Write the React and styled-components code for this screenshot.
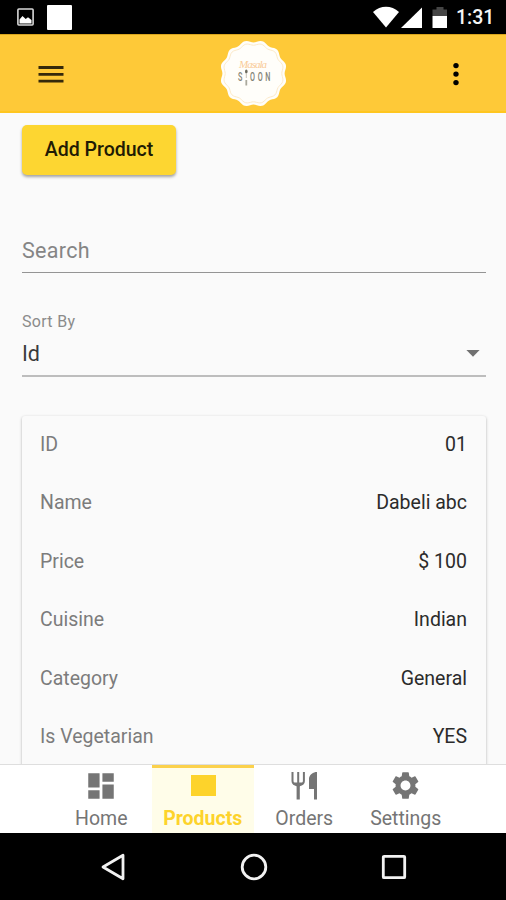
import styled, { createGlobalStyle, css } from 'styled-components';
import { MdDashboard, MdSettings } from 'react-icons/md';

const product = [
  { label: 'ID', value: '01' },
  { label: 'Name', value: 'Dabeli abc' },
  { label: 'Price', value: '$ 100' },
  { label: 'Cuisine', value: 'Indian' },
  { label: 'Category', value: 'General' },
  { label: 'Is Vegetarian', value: 'YES' },
];

const tabs = [
  { name: 'Home', icon: <MdDashboard size={34} /> },
  { name: 'Products', icon: <ProductIcon />, active: true },
  { name: 'Orders', icon: <CutleryIcon /> },
  { name: 'Settings', icon: <MdSettings size={33} /> },
];

export default function App() {
  return (
    <Screen>
      <GlobalStyle />
      <StatusBar />
      <Header />
      <Main>
        <AddButton type="button">Add Product</AddButton>
        <SearchInput placeholder="Search" aria-label="Search" />
        <SortField>
          <SortLabel>Sort By</SortLabel>
          <SortValue>
            Id
            <svg width="14" height="7" viewBox="0 0 14 7">
              <path d="M0.4 0h13.2L7 6.8z" fill="#707070" />
            </svg>
          </SortValue>
        </SortField>
        <Card>
          {product.map(({ label, value }) => (
            <Row key={label}>
              <RowLabel>{label}</RowLabel>
              <span>{value}</span>
            </Row>
          ))}
        </Card>
      </Main>
      <TabBar>
        {tabs.map(({ name, icon, active }) => (
          <Tab key={name} $active={active}>
            <TabIcon>{icon}</TabIcon>
            <TabLabel>{name}</TabLabel>
          </Tab>
        ))}
      </TabBar>
      <SystemBar>
        <svg width="26" height="30" viewBox="0 0 26 30">
          <path d="M23 3.2v23.6L3 15z" fill="none" stroke="#f2f2f2" strokeWidth="2.8" strokeLinejoin="round" />
        </svg>
        <svg width="30" height="30" viewBox="0 0 30 30">
          <circle cx="15" cy="15" r="11.8" fill="none" stroke="#f2f2f2" strokeWidth="2.8" />
        </svg>
        <svg width="26" height="30" viewBox="0 0 26 30">
          <rect x="2.3" y="4.3" width="21.4" height="21.4" rx="0.8" fill="none" stroke="#f2f2f2" strokeWidth="2.8" />
        </svg>
      </SystemBar>
    </Screen>
  );
}

function StatusBar() {
  return (
    <StatusWrapper>
      <StatusGroup $gap={13}>
        <svg width="17" height="18" viewBox="0 0 17 18">
          <rect x="0.9" y="1" width="15.2" height="16" rx="1" fill="none" stroke="#d8d8d8" strokeWidth="1.6" />
          <path d="M2.5 15.5v-4l3-3.5 3.2 3 2.3-1.8 3.5 2.8v3.5z" fill="#fff" />
        </svg>
        <Notification />
      </StatusGroup>
      <StatusGroup $gap={0}>
        <svg width="77" height="24" viewBox="0 0 77 24">
          <path d="M3 7C10.5 0 21.5 0 29 7L16 22.4z" fill="#fff" />
          <path d="M52 2.5V23H31z" fill="#fff" />
          <path d="M62.5 4.5h4V2h7v2.5H77V11H62.5z" fill="#454545" />
          <path d="M62.5 11H77v12H62.5z" fill="#fff" />
        </svg>
        <Time>1:31</Time>
      </StatusGroup>
    </StatusWrapper>
  );
}

function Header() {
  return (
    <HeaderWrapper>
      <IconButton type="button" aria-label="Menu">
        <svg width="26" height="20" viewBox="0 0 26 20">
          <path d="M.5 3.5h25M.5 10.3h25M.5 17.1h25" stroke="#35290b" strokeWidth="2.8" />
        </svg>
      </IconButton>
      <Logo />
      <IconButton type="button" aria-label="More" $right>
        <svg width="6" height="24" viewBox="0 0 6 24">
          <circle cx="3" cy="3.6" r="2.7" />
          <circle cx="3" cy="12.1" r="2.7" />
          <circle cx="3" cy="20.6" r="2.7" />
        </svg>
      </IconButton>
    </HeaderWrapper>
  );
}

// wavy outline of the badge, twelve bumps round the circle
function wavyCircle(radius, depth) {
  const points = [];
  for (let deg = 0; deg < 360; deg += 3) {
    const angle = (deg * Math.PI) / 180;
    const r = radius + depth * Math.cos(12 * (angle - Math.PI / 12));
    points.push(
      `${(34.5 + r * Math.cos(angle)).toFixed(2)},${(34.5 + r * Math.sin(angle)).toFixed(2)}`
    );
  }
  return points.join(' ');
}

function Logo() {
  return (
    <svg width="68" height="68" viewBox="0 0 68 68">
      <polygon points={wavyCircle(32.3, 1.2)} fill="#fffefa" />
      <polygon points={wavyCircle(29.3, 1)} fill="none" stroke="#fbe6c3" strokeWidth="0.9" />
      <LogoScript x="20" y="29" textLength="28">
        Masala
      </LogoScript>
      <LogoName transform="translate(19 42) scale(.6 1)">S</LogoName>
      <LogoName transform="translate(31 42) scale(.6 1)" textLength="34">
        OON
      </LogoName>
      <ellipse cx="27.3" cy="32.5" rx="1.3" ry="2.1" fill="#6b6a5e" />
      <path d="M27.3 34v5" stroke="#c6c4b8" strokeWidth="1" />
      <path d="M27.3 41v5.5" stroke="#aaa99d" strokeWidth="1.8" />
    </svg>
  );
}

function ProductIcon() {
  return (
    <svg width="26" height="22" viewBox="0 0 26 22">
      <rect x="1" y="0" width="25" height="21" fill="#fdd32b" />
    </svg>
  );
}

function CutleryIcon() {
  return (
    <svg width="26" height="28" viewBox="0 0 26 28">
      <path
        d="M1.5 0v9c0 2.8 2 4 5.7 4s5.7-1.2 5.7-4V0M7.2 0v13"
        fill="none"
        stroke="#757575"
        strokeWidth="2"
      />
      <path d="M2 10.5h10.4l-3.6 4v13H5.6v-13z" />
      <path d="M26 0v27.5h-3V17h-5V6c1-3.5 4-6 8-6z" />
    </svg>
  );
}

const GlobalStyle = createGlobalStyle`
  * {
    box-sizing: border-box;
  }

  body {
    margin: 0;
    font-family: Roboto, 'Liberation Sans', sans-serif;
    background: #fafafa;
  }

  svg {
    display: block;
    flex-shrink: 0;
  }
`;

const Screen = styled.div`
  display: flex;
  flex-direction: column;
  height: 900px;
  overflow: hidden;
`;

const StatusWrapper = styled.div`
  display: flex;
  justify-content: space-between;
  flex: 0 0 34px;
  padding: 0 11px 0 17px;
  background: #000;
`;

const StatusGroup = styled.div`
  display: flex;
  align-items: center;
  gap: ${({ $gap }) => $gap}px;
`;

const Notification = styled.span`
  width: 25px;
  height: 25px;
  margin-top: 1px;
  border-radius: 1px;
  background: #fff;
`;

const Time = styled.span`
  margin-left: 9px;
  padding-top: 2px;
  width: 39px;
  font-size: 19.5px;
  font-weight: 500;
  line-height: 32px;
  color: #f5f5f5;
`;

const HeaderWrapper = styled.header`
  display: grid;
  grid-template-columns: 1fr 68px 1fr;
  align-items: center;
  flex: 0 0 79px;
  padding: 0 47px 0 46px;
  border-top: 1px solid #d9a51d;
  border-bottom: 2px solid #ffc61f;
  background: #fec938;
`;

const IconButton = styled.button`
  justify-self: ${({ $right }) => ($right ? 'end' : 'start')};
  margin-left: ${({ $right }) => ($right ? '0' : '-8px')};
  padding: 2px 0 0;
  border: none;
  background: none;
`;

const LogoScript = styled.text`
  font-family: 'Liberation Serif', serif;
  font-size: 11px;
  font-style: italic;
  fill: #f9cb98;
`;

const LogoName = styled.text`
  font-family: Roboto, sans-serif;
  font-size: 12px;
  font-weight: 500;
  fill: #828276;
`;

const Main = styled.main`
  flex: 1;
  min-height: 0;
  padding: 12px 20px 0 22px;
  overflow: hidden;
`;

const AddButton = styled.button`
  display: block;
  width: 154px;
  height: 50px;
  padding: 0 0 2px;
  border: none;
  border-radius: 5px;
  background: #fdd631;
  box-shadow: 0 2px 3px rgba(0, 0, 0, 0.35);
  font: 500 19.5px Roboto, sans-serif;
  color: #211b04;
`;

const SearchInput = styled.input`
  display: block;
  width: 100%;
  height: 47px;
  margin-top: 51px;
  padding: 2px 0 0;
  border: none;
  border-bottom: 1px solid #949494;
  border-radius: 0;
  background: none;
  font: 400 21.5px Roboto, sans-serif;
  letter-spacing: 0.3px;
  outline: none;

  &::placeholder {
    color: #858585;
  }
`;

const SortField = styled.div`
  height: 104px;
  padding-top: 38px;
  border-bottom: 2px solid #bdbdbd;
`;

const SortLabel = styled.div`
  font-size: 16px;
  letter-spacing: 0.3px;
  line-height: 22px;
  color: #8b8b8b;
`;

const SortValue = styled.div`
  display: flex;
  align-items: center;
  justify-content: space-between;
  padding-right: 6px;
  font-size: 21.5px;
  line-height: 41px;
  color: #3a3a3a;
`;

const Card = styled.section`
  height: 420px;
  margin-top: 39px;
  border-radius: 3px;
  background: #fafafa;
  box-shadow: 0 1px 3px rgba(0, 0, 0, 0.3);
`;

const Row = styled.div`
  display: flex;
  align-items: center;
  justify-content: space-between;
  height: 58.5px;
  padding: 0 19px 2px 18px;
  font-size: 19.5px;
  color: #2b2b2b;
`;

const RowLabel = styled.span`
  color: #7c7c7c;
`;

const TabBar = styled.nav`
  display: flex;
  flex: 0 0 69px;
  min-height: 0;
  justify-content: center;
  padding-left: 1px;
  border-top: 1px solid #dedede;
  background: #fff;
`;

const Tab = styled.div`
  display: flex;
  flex-direction: column;
  align-items: center;
  width: 101.5px;
  border-top: 3px solid transparent;
  color: #757575;
  fill: #757575;

  ${({ $active }) =>
    $active &&
    css`
      border-top-color: #fbd14b;
      background: #fffde9;
      color: #fdd32b;
      font-weight: 700;
    `}
`;

const TabIcon = styled.div`
  display: flex;
  align-items: center;
  flex: 0 0 35px;
`;

const TabLabel = styled.span`
  font-size: 19.5px;
  line-height: 32px;
`;

const SystemBar = styled.footer`
  display: flex;
  align-items: center;
  justify-content: space-between;
  flex: 0 0 67px;
  padding: 0 99px 0 100px;
  background: #000;
`;
